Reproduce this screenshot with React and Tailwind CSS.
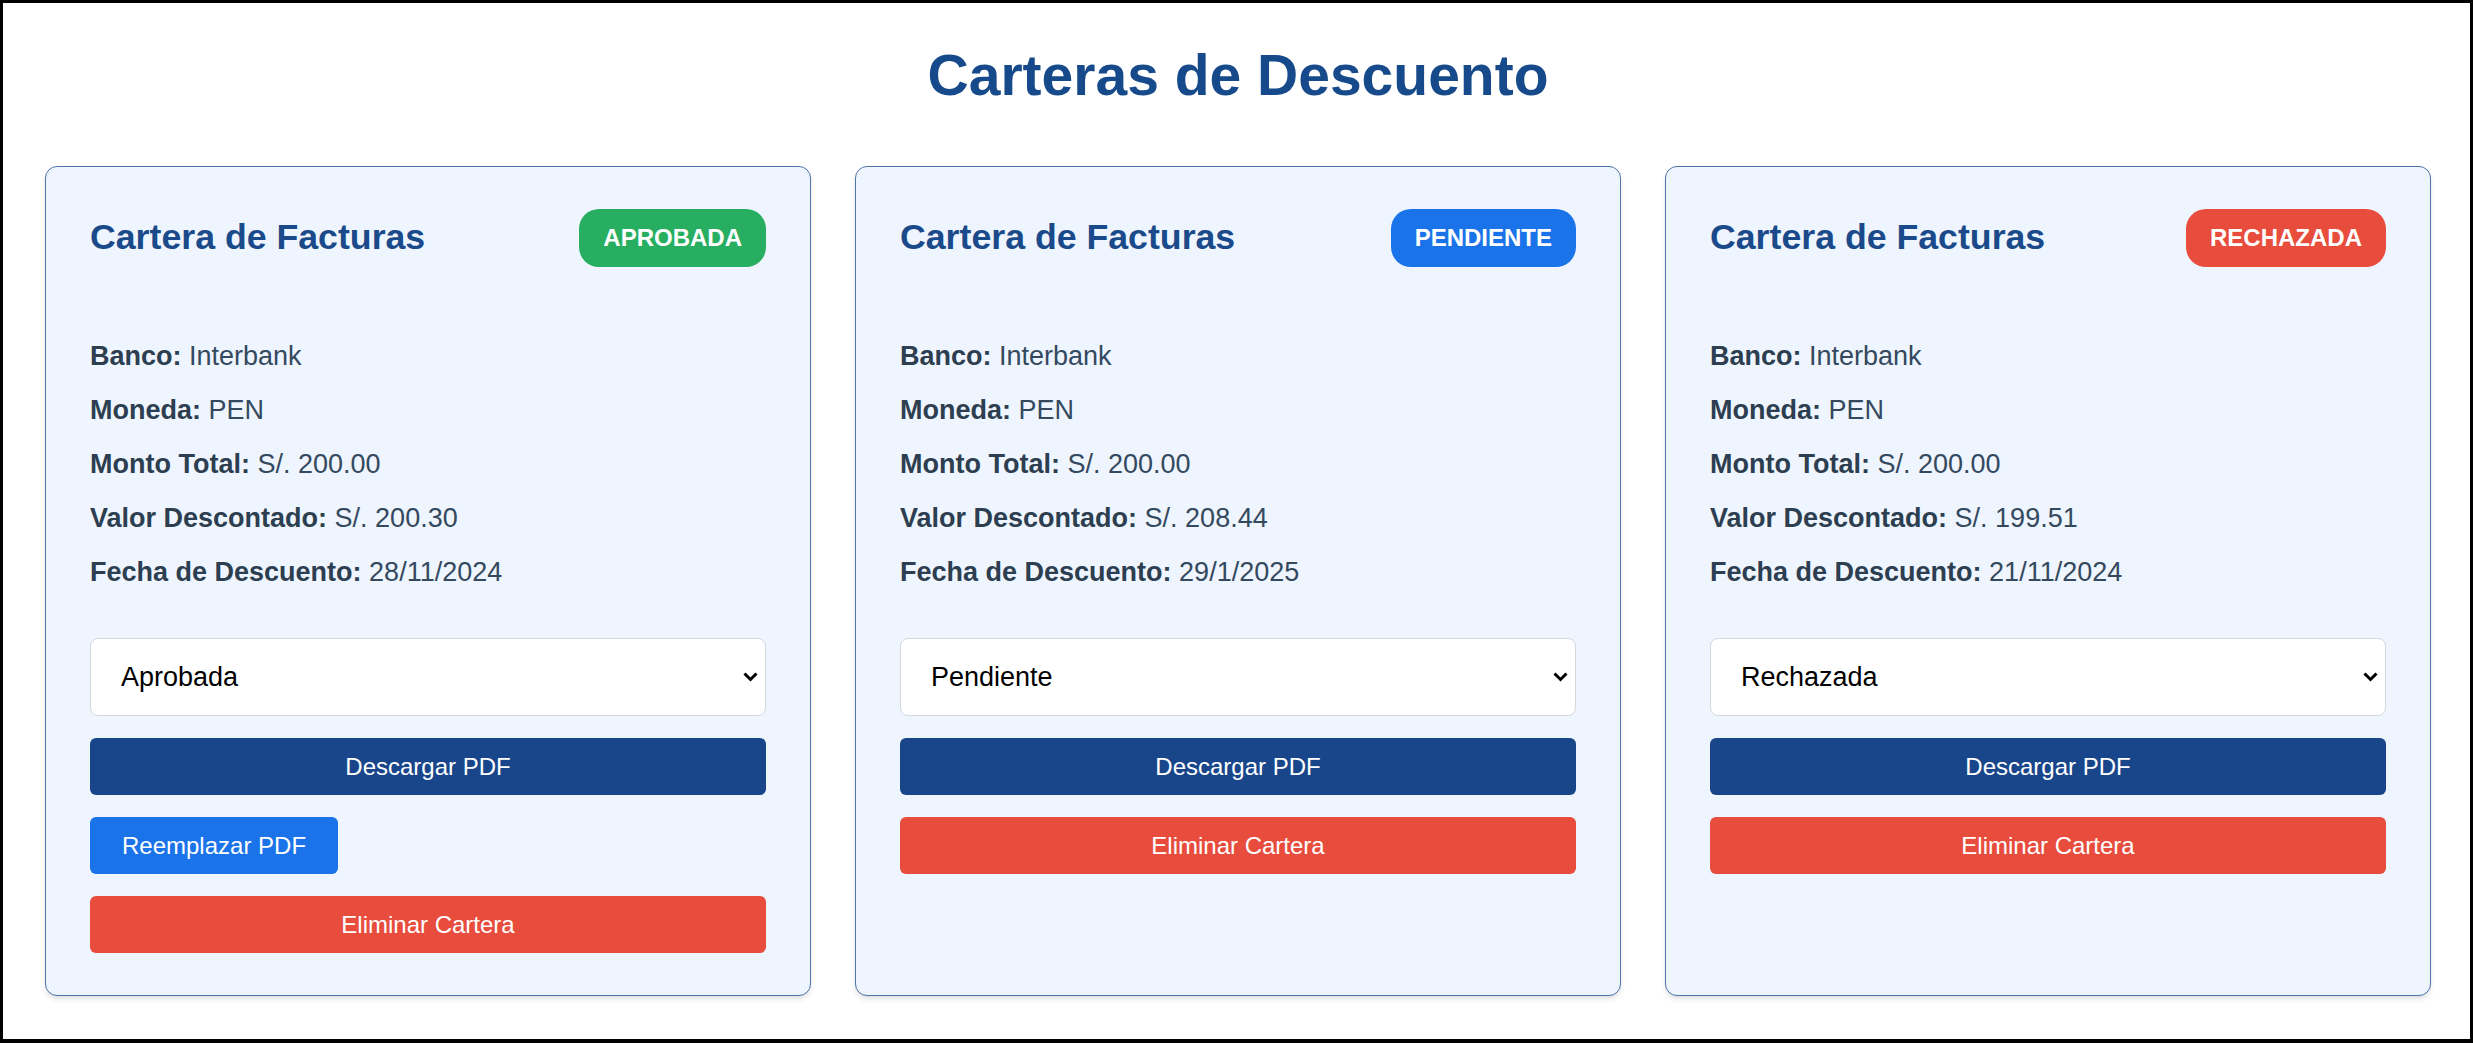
import { useState } from "react";

const FONT = { fontFamily: '"Liberation Sans", Arial, sans-serif' };

const BADGE = {
  Aprobada: "bg-[#27ae60]",
  Pendiente: "bg-[#1a73e8]",
  Rechazada: "bg-[#e74c3c]",
};

const CARTERAS = [
  { id: 1, banco: "Interbank", moneda: "PEN", total: "200.00", descontado: "200.30", fecha: "28/11/2024", estado: "Aprobada" },
  { id: 2, banco: "Interbank", moneda: "PEN", total: "200.00", descontado: "208.44", fecha: "29/1/2025", estado: "Pendiente" },
  { id: 3, banco: "Interbank", moneda: "PEN", total: "200.00", descontado: "199.51", fecha: "21/11/2024", estado: "Rechazada" },
];

function Row({ label, value }) {
  return (
    <p className="text-[27px] leading-[54px] text-[#2c3e50]">
      <span className="font-bold">{label}:</span> <span className="text-[#34495e]">{value}</span>
    </p>
  );
}

function Card({ c }) {
  const [estado, setEstado] = useState(c.estado);
  return (
    <div className="bg-[#eef5fe] border border-[#4f74aa] rounded-xl shadow-md px-[44px] pt-[42px] pb-[42px] flex flex-col">
      <div className="flex items-center justify-between">
        <h2 className="text-[35.7px] font-bold text-[#1a4a8a]">Cartera de Facturas</h2>
        <span className={`${BADGE[c.estado]} text-white font-bold text-[24px] leading-[28px] px-[24px] py-[15px] rounded-[20px] uppercase`}>
          {c.estado}
        </span>
      </div>

      <div className="mt-[62px]">
        <Row label="Banco" value={c.banco} />
        <Row label="Moneda" value={c.moneda} />
        <Row label="Monto Total" value={`S/. ${c.total}`} />
        <Row label="Valor Descontado" value={`S/. ${c.descontado}`} />
        <Row label="Fecha de Descuento" value={c.fecha} />
      </div>

      <div className="mt-[39px] relative">
        <select
          value={estado}
          onChange={e => setEstado(e.target.value)}
          className="appearance-none w-full h-[78px] bg-white border border-[#d3d8de] rounded-lg pl-[30px] pr-12 text-[27px] text-black outline-none"
          style={FONT}
        >
          <option>Pendiente</option>
          <option>Aprobada</option>
          <option>Rechazada</option>
        </select>
        <svg className="absolute right-[8px] top-1/2 -translate-y-1/2 pointer-events-none" width="15" height="10" viewBox="0 0 15 10" fill="none">
          <polyline points="1.5,1.5 7.5,7.5 13.5,1.5" stroke="#000" strokeWidth="3" />
        </svg>
      </div>

      <div className="mt-[22px] flex flex-col gap-[22px] items-start">
        <button className="w-full h-[57px] bg-[#19468a] text-white text-[24px] rounded-md" style={FONT}>Descargar PDF</button>
        {c.estado === "Aprobada" && (
          <button className="h-[57px] px-[32px] bg-[#1a73e8] text-white text-[24px] rounded-md" style={FONT}>Reemplazar PDF</button>
        )}
        <button className="w-full h-[57px] bg-[#e74c3c] text-white text-[24px] rounded-md" style={FONT}>Eliminar Cartera</button>
      </div>
    </div>
  );
}

export default function App() {
  return (
    <div className="h-[1043px] border-[3px] border-b-4 border-black bg-white pl-[42px] pr-[39px] pt-[41px]" style={FONT}>
      <h1 className="text-[57px] font-bold text-[#174a8b] text-center leading-[63px]">Carteras de Descuento</h1>
      <div className="mt-[59px] grid grid-cols-3 gap-[44px] items-stretch">
        {CARTERAS.map(c => <Card key={c.id} c={c} />)}
      </div>
    </div>
  );
}
